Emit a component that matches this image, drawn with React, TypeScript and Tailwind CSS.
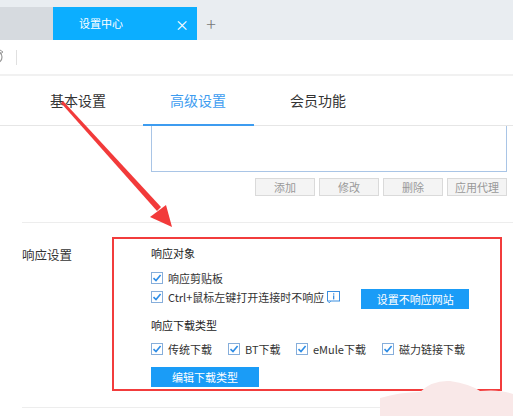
import React from 'react';

const font = { fontFamily: '"Noto Sans CJK SC", "Noto Sans", sans-serif' };

const CheckBox: React.FC = () => (
  <span className="inline-flex w-[12px] h-[12px] shrink-0 border border-[#86aedb] bg-white items-center justify-center">
    <svg width="10" height="10" viewBox="0 0 10 10">
      <path d="M1.5 5.2 L4 7.6 L8.6 2" fill="none" stroke="#2e8de6" strokeWidth="1.6" />
    </svg>
  </span>
);

const CheckItem: React.FC<{ label: string; w?: string }> = ({ label, w = '' }) => (
  <label className={`flex items-center gap-[5px] text-[11px] text-[#333] leading-[16px] ${w}`}>
    <CheckBox />
    <span>{label}</span>
  </label>
);

const GrayButton: React.FC<{ label: string }> = ({ label }) => (
  <button className="w-[60px] h-[18px] bg-[#f4f4f4] border border-[#dadada] text-[11px] leading-[16px] text-[#999]">
    {label}
  </button>
);

const BlueButton: React.FC<{ label: string }> = ({ label }) => (
  <button className="w-[108px] h-[20px] bg-[#1a9cf7] text-white text-[11px] leading-[20px]">
    {label}
  </button>
);

export default function App() {
  return (
    <div className="relative w-[513px] h-[416px] bg-white overflow-hidden" style={font}>
      {/* 标签栏 */}
      <div className="h-[40px] bg-[#e9edf1] flex items-end">
        <div className="w-[53px] h-[33px] bg-[#d6dadf]" />
        <div className="w-[144px] h-[33px] bg-[#0caeff] flex items-center pl-[26px] pr-[8px] text-white text-[11px]">
          <span className="flex-1">设置中心</span>
          <span className="text-[14px] leading-none">×</span>
        </div>
        <div className="h-[33px] w-[28px] flex items-center justify-center text-[#777] text-[18px] font-light">+</div>
      </div>

      {/* 地址栏 */}
      <div className="h-[34px] flex items-center">
        <svg width="8" height="16" viewBox="0 0 8 16">
          <path d="M-4 2 A6 6 0 0 1 2 8 A6 6 0 0 1 -4 14" fill="none" stroke="#999" strokeWidth="1.2" />
          <path d="M0 1 L3 3 L0 5" fill="none" stroke="#999" strokeWidth="1" />
        </svg>
        <div className="ml-[8px] w-px h-[15px] bg-[#e0e0e0]" />
      </div>
      <div className="h-[2px] bg-[#f1f1f1]" />

      {/* 设置导航 */}
      <div className="h-[50px] flex pl-[18px] border-b border-[#e6e6e6]">
        {['基本设置', '高级设置', '会员功能'].map((t, i) => (
          <div key={t} className="relative w-[120px] flex items-center justify-center">
            <span className={`text-[14px] ${i === 1 ? 'text-[#3d9cf0]' : 'text-[#333]'}`}>{t}</span>
            {i === 1 && <div className="absolute left-[5px] right-[4px] bottom-[-1px] h-[2px] bg-[#3d9cf0]" />}
          </div>
        ))}
      </div>

      {/* 代理列表 */}
      <div className="pl-[151px] pr-[6px]">
        <div className="h-[46px] border-x border-b border-[#a9c5e6]" />
        <div className="mt-[6px] flex justify-end gap-[4px]">
          <GrayButton label="添加" />
          <GrayButton label="修改" />
          <GrayButton label="删除" />
          <GrayButton label="应用代理" />
        </div>
      </div>

      <div className="ml-[22px] mt-[26px] border-t border-[#ededed]" />

      {/* 响应设置 */}
      <div className="flex pl-[22px] mt-[14px]">
        <div className="w-[90px] pt-[9px] text-[12.5px] leading-[18px] text-[#333]">响应设置</div>
        <div className="w-[390px] h-[154px] border-2 border-[#f23c3c] pl-[37px] pt-[6px]">
          <div className="text-[11px] leading-[16px] text-[#222]">响应对象</div>
          <div className="mt-[9px]">
            <CheckItem label="响应剪贴板" />
          </div>
          <div className="mt-[1px] h-[20px] flex items-center">
            <CheckItem label="Ctrl+鼠标左键打开连接时不响应" />
            <svg width="13" height="12" viewBox="0 0 13 12" className="ml-[3px]">
              <rect x="0.5" y="0.5" width="12" height="9.5" fill="white" stroke="#3b8fe0" />
              <rect x="6" y="2.3" width="1.3" height="1.3" fill="#3b8fe0" />
              <rect x="6" y="4.4" width="1.3" height="4" fill="#3b8fe0" />
              <path d="M2 10 L2 12 L4 10" fill="white" stroke="#3b8fe0" strokeWidth="0.8" />
            </svg>
            <div className="ml-[21px]">
              <BlueButton label="设置不响应网站" />
            </div>
          </div>
          <div className="mt-[10px] text-[11px] leading-[16px] text-[#222]">响应下载类型</div>
          <div className="mt-[8px] flex">
            <CheckItem label="传统下载" w="w-[77px]" />
            <CheckItem label="BT下载" w="w-[68px]" />
            <CheckItem label="eMule下载" w="w-[86px]" />
            <CheckItem label="磁力链接下载" />
          </div>
          <div className="mt-[6px]">
            <BlueButton label="编辑下载类型" />
          </div>
        </div>
      </div>

      <div className="ml-[22px] mt-[16px] border-t border-[#ededed]" />

      {/* 水印残影 */}
      <svg className="absolute left-[380px] top-[376px]" width="133" height="40" viewBox="0 0 133 40">
        <path d="M0 22 Q20 16 40 16 Q52 4 70 5 Q90 8 100 15 Q120 13 133 18 L133 40 L0 40 Z" fill="#f9e8e8" />
      </svg>

      {/* 红色箭头标注 */}
      <svg className="absolute left-0 top-0 pointer-events-none" width="513" height="416">
        <polygon points="61,103 63,101 161,207 157,211" fill="#f23a3a" />
        <polygon points="150,217 166,205 172,227" fill="#f23a3a" />
      </svg>
    </div>
  );
}
